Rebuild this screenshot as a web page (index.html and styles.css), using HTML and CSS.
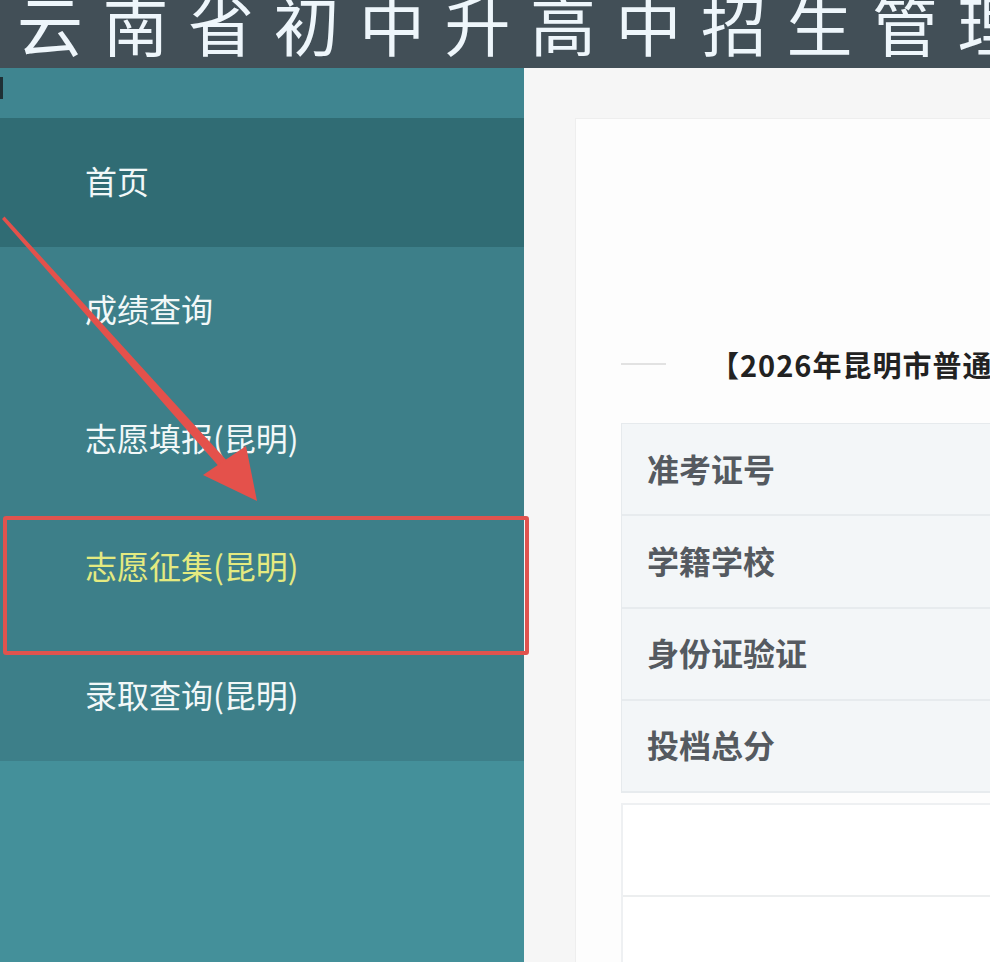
FILE: index.html
```html
<!DOCTYPE html>
<html lang="zh-CN">
<head>
<meta charset="utf-8">
<title>云南省初中升高中招生管理</title>
<link rel="stylesheet" href="styles.css">
</head>
<body>
<div class="page">
  <header class="header">
    <h1 class="site-title">云南省初中升高中招生管理系统</h1>
  </header>
  <div class="body">
    <aside class="sidebar">
      <div class="side-top"><span class="side-mark"></span></div>
      <nav class="menu">
        <a class="menu-item active">首页</a>
        <a class="menu-item">成绩查询</a>
        <a class="menu-item">志愿填报(昆明)</a>
        <a class="menu-item current">志愿征集(昆明)</a>
        <a class="menu-item">录取查询(昆明)</a>
      </nav>
      <div class="side-rest"></div>
    </aside>
    <main class="main">
      <section class="panel">
        <div class="title-row">
          <span class="title-line"></span>
          <h2 class="title-text">【2026年昆明市普通高中志愿征集】</h2>
        </div>
        <div class="info-table">
          <div class="info-row">准考证号</div>
          <div class="info-row">学籍学校</div>
          <div class="info-row">身份证验证</div>
          <div class="info-row">投档总分</div>
        </div>
        <div class="blank-table">
          <div class="blank-row"></div>
          <div class="blank-row"></div>
        </div>
      </section>
    </main>
  </div>
  <div class="highlight-box"></div>
  <svg class="arrow" width="300" height="520" viewBox="0 0 300 520">
    <polygon points="2,219 4.5,216.5 229,463 222,470" fill="#e4514b"/>
    <polygon points="257,501 203,475 246,446" fill="#e4514b"/>
  </svg>
</div>
</body>
</html>
```
FILE: styles.css
```css
* { box-sizing: border-box; margin: 0; padding: 0; }
html, body { width: 990px; height: 962px; overflow: hidden; }
body {
  font-family: "Noto Sans CJK SC", "Noto Sans", sans-serif;
  background: #f5f5f5;
}
.page { position: relative; width: 990px; height: 962px; display: flex; flex-direction: column; }

.header {
  height: 68px;
  background: #424f57;
  overflow: hidden;
  flex: none;
}
.site-title {
  font-weight: 400;
  font-size: 66px;
  line-height: 64px;
  letter-spacing: 19.5px;
  color: #eef6fb;
  white-space: nowrap;
  margin-top: -10px;
  padding-left: 17px;
}

.body { flex: 1; display: flex; min-height: 0; }

.sidebar {
  width: 524px;
  flex: none;
  display: flex;
  flex-direction: column;
  background: #44909a;
}
.side-top {
  height: 50px;
  flex: none;
  background: #3f8590;
}
.side-mark {
  display: block;
  width: 3px;
  height: 22px;
  margin-top: 9px;
  background: #1f3035;
}
.menu { display: flex; flex-direction: column; flex: none; background: #3d7f89; }
.menu-item {
  height: 128.5px;
  flex: none;
  display: flex;
  align-items: center;
  padding: 0 0 5px 85px;
  font-size: 32px;
  color: #f2f8f8;
  text-decoration: none;
}
.menu-item.active { background: #306c74; }
.menu-item.current { color: #e4ea80; }
.side-rest { flex: 1; background: #44909a; }

.main {
  flex: 1;
  background: #f6f6f6;
  padding: 50px 0 0 51px;
  min-width: 0;
}
.panel {
  background: #fdfdfd;
  height: 100%;
  padding: 0 0 0 45px;
  display: flex;
  flex-direction: column;
  border-left: 1px solid #eeeeee;
  border-top: 1px solid #eeeeee;
  overflow: hidden;
}
.panel > * { flex: none; }
.title-row {
  display: flex;
  align-items: center;
  height: 80px;
  margin-top: 205px;
  white-space: nowrap;
}
.title-line {
  width: 45px;
  height: 2px;
  background: #e2e2e2;
  flex: none;
}
.title-text {
  margin-left: 44px;
  font-size: 29px;
  letter-spacing: 1px;
  font-weight: 700;
  color: #222;
}

.info-table {
  margin-top: 19px;
  border-top: 1px solid #e6eaed;
  border-left: 1px solid #e6eaed;
}
.info-row {
  height: 92.25px;
  display: flex;
  align-items: center;
  padding: 0 0 3px 25px;
  background: #f3f6f8;
  border-bottom: 2px solid #e7ebee;
  font-size: 32px;
  font-weight: 700;
  color: #555a60;
}

.blank-table {
  margin-top: 10px;
  border-top: 2px solid #eef0f2;
  border-left: 2px solid #eef0f2;
  background: #fff;
}
.blank-row {
  height: 92px;
  border-bottom: 2px solid #eceeef;
}

.highlight-box {
  position: absolute;
  left: 3px;
  top: 516px;
  width: 526px;
  height: 139px;
  border: 4px solid #e0534e;
  border-radius: 3px;
}
.arrow {
  position: absolute;
  left: 0;
  top: 0;
  pointer-events: none;
}
```
